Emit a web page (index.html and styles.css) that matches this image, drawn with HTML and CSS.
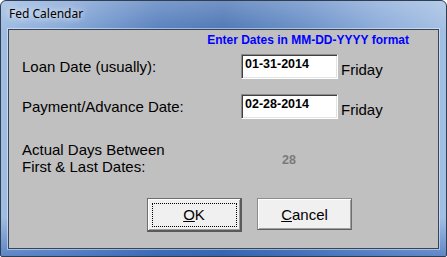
FILE: index.html
```html
<!DOCTYPE html>
<html lang="en">
<head>
    <meta charset="UTF-8">
    <title>Fed Calendar</title>
    <link rel="stylesheet" href="styles.css">
</head>
<body>
    <div class="window">
        <div class="title-bar">Fed Calendar</div>
        <div class="client">
            <div class="hint">Enter Dates in MM-DD-YYYY format</div>

            <!-- Date rows -->
            <div class="date-grid">
                <label for="loanDate">Loan Date (usually):</label>
                <input type="text" id="loanDate" class="date-box" value="01-31-2014">
                <span class="day">Friday</span>

                <label for="payDate">Payment/Advance Date:</label>
                <input type="text" id="payDate" class="date-box" value="02-28-2014">
                <span class="day">Friday</span>
            </div>

            <!-- Days between -->
            <div class="days">
                <div class="days-label">Actual Days Between<br>First &amp; Last Dates:</div>
                <div class="days-value">28</div>
            </div>

            <div class="buttons">
                <button type="button" class="btn btn-default"><u>O</u>K</button>
                <button type="button" class="btn"><u>C</u>ancel</button>
            </div>
        </div>
    </div>
</body>
</html>
```

FILE: styles.css
```css
/* General Styles */
body {
    margin: 0;
    padding: 0;
    background-color: #fff;
}

.window {
    width: 447px;
    height: 257px;
    box-sizing: border-box;
    display: flex;
    flex-direction: column;
    padding: 0 7px 7px 7px;
    border: 1px solid #2f3e52;
    border-radius: 6px 6px 2px 2px;
    background:
        linear-gradient(to bottom, rgba(255, 255, 255, 0.2) 0, rgba(255, 255, 255, 0) 12%, rgba(255, 255, 255, 0) 85%, rgba(30, 80, 170, 0.5) 100%),
        linear-gradient(to right, #9fbce2 0, #86a8d8 15%, #5a82bf 35%, #4f78b6 50%, #6a90c8 68%, #8cacda 85%, #a3bfe3 100%);
}

.title-bar {
    height: 28px;
    box-sizing: border-box;
    padding: 5px 0 0 1px;
    font-family: 'Noto Sans', sans-serif;
    font-size: 12px;
    line-height: 16px;
    color: #000;
    text-shadow: 0 0 6px rgba(255, 255, 255, 0.9), 0 0 10px rgba(255, 255, 255, 0.6);
}

.client {
    flex: 1;
    display: flex;
    flex-direction: column;
    padding: 3px 29px 0 13px;
    background-color: #c0c0c0;
    border: 1px solid #34445a;
    box-shadow: 0 0 0 1px rgba(255, 255, 255, 0.45);
    font-family: 'Liberation Sans', Arial, sans-serif;
    font-size: 15px;
    color: #000;
}

.hint {
    text-align: right;
    font-size: 12px;
    font-weight: bold;
    line-height: 14px;
    color: #0000ff;
}

.date-grid {
    display: grid;
    grid-template-columns: 216px 97px auto;
    grid-auto-rows: 25px;
    column-gap: 3px;
    row-gap: 15px;
    margin-top: 7px;
    align-items: center;
}

.date-grid label {
    line-height: 17px;
}

.date-box {
    width: 97px;
    height: 25px;
    box-sizing: border-box;
    margin: 0;
    padding: 0 2px 5px 3px;
    border: 1px solid;
    border-color: #8a8a8a #ffffff #ffffff #8a8a8a;
    box-shadow: inset 1px 1px 0 #404040, inset -1px -1px 0 #e3e3e3;
    background-color: #fff;
    font-family: 'Liberation Sans', Arial, sans-serif;
    font-size: 12.5px;
    font-weight: bold;
    color: #000;
    outline: none;
}

.day {
    line-height: 17px;
    margin-top: 5px;
}

.days {
    display: grid;
    grid-template-columns: 216px auto;
    column-gap: 3px;
    margin-top: 22px;
}

.days-label {
    line-height: 17px;
}

.days-value {
    margin-left: 41px;
    padding-top: 12px;
    font-size: 12.5px;
    font-weight: bold;
    line-height: 15px;
    color: #7a7a7a;
}

.buttons {
    display: flex;
    align-items: flex-start;
    gap: 15px;
    margin-top: 23px;
    margin-left: 125px;
}

.btn {
    width: 95px;
    height: 32px;
    margin: 0;
    padding: 0;
    border: 1px solid #8c8c8c;
    border-right-color: #6e6e6e;
    border-bottom-color: #5e5e5e;
    box-shadow: inset 1px 1px 0 #fff, inset -1px -1px 0 #a0a0a0;
    background-color: #f0f0f0;
    font-family: 'Liberation Sans', Arial, sans-serif;
    font-size: 15px;
    color: #000;
    cursor: pointer;
}

.btn-default {
    height: 34px;
    border-color: #6e6e6e;
    border-bottom: 2px solid #5a5a5a;
    border-right: 2px solid #5a5a5a;
    outline: 1px dotted #000;
    outline-offset: -6px;
}
```
